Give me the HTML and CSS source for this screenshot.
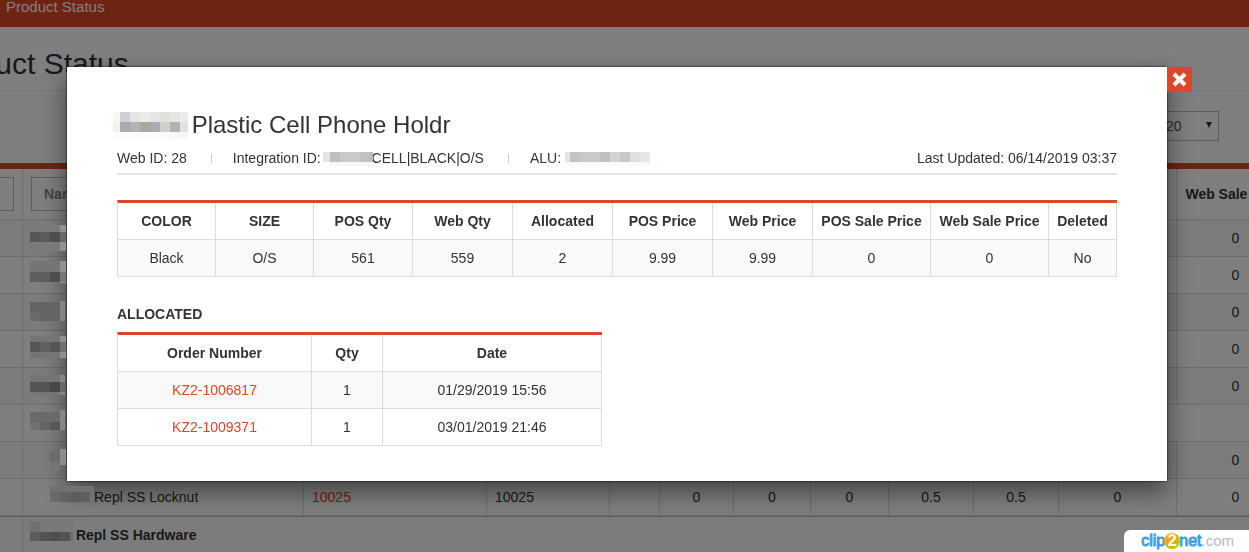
FILE: index.html
```html
<!DOCTYPE html>
<html lang="en">
<head>
    <meta charset="UTF-8">
    <meta name="viewport" content="width=device-width, initial-scale=1.0">
    <title>Product Status</title>
    <link rel="stylesheet" href="styles.css">
</head>
<body>
    <header class="topbar">Product Status</header>

    <main class="page">
        <h1>Product Status</h1>

        <div class="toolbar">
            <div class="page-size">
                <select aria-label="Rows per page">
                    <option>20</option>
                    <option>50</option>
                </select>
            </div>
        </div>

        <table class="products">
            <colgroup>
                <col class="w-id">
                <col>
                <col class="w-integration">
                <col class="w-alu">
                <col class="w-attr">
                <col class="w-qty">
                <col class="w-web">
                <col class="w-allocated">
                <col class="w-price">
                <col class="w-price">
                <col class="w-sale">
                <col class="w-sale">
            </colgroup>
            <thead>
                <tr>
                    <th><input type="text" placeholder="Web ID" aria-label="Web ID"></th>
                    <th><input type="text" placeholder="Name" aria-label="Name"></th>
                    <th></th><th></th><th></th><th></th><th></th><th></th><th></th><th></th><th></th>
                    <th>Web Sale Price</th>
                </tr>
            </thead>
            <tbody>
                <tr>
                    <td></td>
                    <td class="name"><svg class="mask" width="36" height="20"><path fill="#7a7a7a" d="M-3-3h33v26h-33z"/><path fill="#565656" d="M0 4h10v10H0z"/><path fill="#5b5d5c" d="M10 4h10v10H10z"/><path fill="#4f4d4d" d="M20 4h10v10H20z"/><path fill="#919191" d="M30-3h6v26h-6z"/><path fill="#686868" d="M30 4h6v10h-6z"/></svg></td>
                    <td></td><td></td><td></td><td></td><td></td><td></td><td></td><td></td><td></td>
                    <td>0</td>
                </tr>
                <tr>
                    <td></td>
                    <td class="name"><svg class="mask" width="36" height="20"><path fill="#757575" d="M0-4h30v11H0z"/><path fill="#5f5d5d" d="M0 7h10v10H0z"/><path fill="#5d605f" d="M10 7h10v10H10z"/><path fill="#504e4d" d="M20 7h10v10H20z"/><path fill="#919191" d="M30-4h6v22h-6z"/><path fill="#777" d="M30 7h6v10h-6z"/></svg></td>
                    <td></td><td></td><td></td><td></td><td></td><td></td><td></td><td></td><td></td>
                    <td>0</td>
                </tr>
                <tr>
                    <td></td>
                    <td class="name"><svg class="mask" width="36" height="20"><path fill="#656464" d="M0 0h30v10H0z"/><path fill="#6b6b6b" d="M0 10h10v9H0z"/><path fill="#646464" d="M10 10h20v9H10z"/><path fill="#838383" d="M30-1h5v20h-5z"/></svg></td>
                    <td></td><td></td><td></td><td></td><td></td><td></td><td></td><td></td><td></td>
                    <td>0</td>
                </tr>
                <tr>
                    <td></td>
                    <td class="name"><svg class="mask" width="36" height="20"><path fill="#757575" d="M0-3h30v22H0z"/><path fill="#575555" d="M0 3h10v10H0z"/><path fill="#616161" d="M10 3h10v10H10z"/><path fill="#565454" d="M20 3h10v10H20z"/><path fill="#8f8f8f" d="M30-3h6v22h-6z"/><path fill="#707070" d="M30 3h6v10h-6z"/></svg></td>
                    <td></td><td></td><td></td><td></td><td></td><td></td><td></td><td></td><td></td>
                    <td>0</td>
                </tr>
                <tr>
                    <td></td>
                    <td class="name"><svg class="mask" width="36" height="20"><path fill="#757575" d="M0-1h30v20H0z"/><path fill="#555" d="M0 6h20v10H0z"/><path fill="#494646" d="M20 6h10v10H20z"/><path fill="#868686" d="M30-1h5v20h-5z"/><path fill="#6a6a6a" d="M30 6h5v10h-5z"/></svg></td>
                    <td></td><td></td><td></td><td></td><td></td><td></td><td></td><td></td><td></td>
                    <td>0</td>
                </tr>
                <tr>
                    <td></td>
                    <td class="name" colspan="11"><svg class="mask" width="36" height="20"><path fill="#6a6a6a" d="M0-1h30V9H0z"/><path fill="#727272" d="M0 9h10v8H0z"/><path fill="#616564" d="M10 9h10v8H10z"/><path fill="#585656" d="M20 9h10v8H20z"/><path fill="#868686" d="M30-3h5v20h-5z"/></svg></td>
                </tr>
                <tr>
                    <td></td>
                    <td class="name child"><svg class="mask" width="16" height="20"><path fill="#6e6c69" d="M0 2h10v10H0z"/><path fill="#757575" d="M0 12h10v9H0z"/><path fill="#8c8c8c" d="M10-1h6v16h-6z"/></svg></td>
                    <td></td><td></td><td></td><td></td><td></td><td></td><td></td><td></td><td></td>
                    <td>0</td>
                </tr>
                <tr>
                    <td></td>
                    <td class="name child"><svg class="mask" width="44" height="20"><path fill="#717171" d="M0-1h44v6H0z"/><path fill="#6b6a67" d="M0 5h10v10H0z"/><path fill="#64625f" d="M10 5h10v10H10z"/><path fill="#5d5c60" d="M20 5h10v10H20z"/><path fill="#62605e" d="M30 5h10v10H30z"/><path fill="#757370" d="M40 5h4v10h-4z"/></svg>Repl SS Locknut</td>
                    <td class="left"><a href="#">10025</a></td>
                    <td class="left">10025</td>
                    <td></td>
                    <td>0</td>
                    <td>0</td>
                    <td>0</td>
                    <td>0.5</td>
                    <td>0.5</td>
                    <td>0</td>
                    <td>0</td>
                </tr>
                <tr class="group">
                    <td></td>
                    <td class="name" colspan="11"><svg class="mask" width="42" height="20"><path fill="#797979" d="M-3-5h46V7H-3z"/><path fill="#707070" d="M0-3h10V7H0z"/><path fill="#5d5c5c" d="M0 7h10v9H0z"/><path fill="#545253" d="M10 7h10v9H10z"/><path fill="#504c4c" d="M20 7h10v9H20z"/><path fill="#565452" d="M30 7h10v9H30z"/><path fill="#6d6d6d" d="M40 7h3v9h-3z"/></svg> Repl SS Hardware</td>
                </tr>
            </tbody>
        </table>
    </main>

    <div class="overlay">
        <div class="modal" role="dialog" aria-labelledby="modalTitle">
            <button class="close" type="button" aria-label="Close">
                <svg width="17" height="17" viewBox="0 0 17 17"><path d="M3 3l11 11M14 3L3 14" stroke="#fff" stroke-width="4"/></svg>
            </button>

            <h2 id="modalTitle"><svg class="mask" width="68" height="28" viewBox="0 0 68 28">
                <path fill="#faf6f0" d="M-4 1h7v10h-7z"/><path fill="#cfced4" d="M3 1h10v10H3z"/><path fill="#e4e4e5" d="M13 1h10v10H13z"/><path fill="#ebebec" d="M23 1h10v10H23z"/><path fill="#e3e6e5" d="M33 1h10v10H33z"/><path fill="#e1e0de" d="M43 1h10v10H43z"/><path fill="#e4e4e5" d="M53 1h10v10H53z"/><path fill="#e9eaec" d="M63 1h8v10h-8z"/>
                <path fill="#f7f0e8" d="M-4 11h7v10h-7z"/><path fill="#a9a9b1" d="M3 11h10v10H3z"/><path fill="#b2b2b2" d="M13 11h10v10H13z"/><path fill="#a8a7a0" d="M23 11h10v10H23z"/><path fill="#a8adb3" d="M33 11h10v10H33z"/><path fill="#d0cec6" d="M43 11h10v10H43z"/><path fill="#b0b3b2" d="M53 11h10v10H53z"/><path fill="#e0e1e7" d="M63 11h8v10h-8z"/>
                <path fill="#fbfbfb" d="M-4 21h57v7H-4z"/><path fill="#f7f7f7" d="M53 21h18v7H53z"/>
            </svg> Plastic Cell Phone Holdr</h2>

            <div class="meta">
                <span>Web ID: 28</span>
                <span class="divided">Integration ID: <svg class="mask" width="47" height="20">
                    <path fill="#e3e4e4" d="M-2 4h7v10h-7z"/><path fill="#bfbfbf" d="M5 4h10v10H5z"/><path fill="#c9c8cb" d="M15 4h20v10H15z"/><path fill="#c2c1c5" d="M35 4h10v10H35z"/><path fill="#bcbcbc" d="M45 4h3v10h-3z"/><path fill="#f7f7f7" d="M5 14h43v4H5z"/>
                </svg>CELL|BLACK|O/S</span>
                <span class="divided">ALU: <svg class="mask" width="85" height="20">
                    <path fill="#e3e4e4" d="M0 4h5v10H0z"/><path fill="#c4c4bf" d="M5 4h10v10H5z"/><path fill="#c8caca" d="M15 4h20v10H15z"/><path fill="#c2c0bf" d="M35 4h10v10H35z"/><path fill="#d0d3d6" d="M45 4h10v10H45z"/><path fill="#c6c8c7" d="M55 4h10v10H55z"/><path fill="#e0dee4" d="M65 4h10v10H65z"/><path fill="#e3e7e8" d="M75 4h10v10H75z"/><path fill="#fafafa" d="M0 14h85v4H0z"/>
                </svg></span>
                <span class="updated">Last Updated: 06/14/2019 03:37</span>
            </div>

            <table class="grid details">
                <colgroup>
                    <col class="w-variant">
                    <col class="w-variant">
                    <col>
                    <col class="w-number">
                    <col class="w-number">
                    <col class="w-number">
                    <col class="w-number">
                    <col class="w-sale">
                    <col class="w-sale">
                    <col class="w-deleted">
                </colgroup>
                <thead>
                    <tr>
                        <th>COLOR</th>
                        <th>SIZE</th>
                        <th>POS Qty</th>
                        <th>Web Qty</th>
                        <th>Allocated</th>
                        <th>POS Price</th>
                        <th>Web Price</th>
                        <th>POS Sale Price</th>
                        <th>Web Sale Price</th>
                        <th>Deleted</th>
                    </tr>
                </thead>
                <tbody>
                    <tr>
                        <td>Black</td>
                        <td>O/S</td>
                        <td>561</td>
                        <td>559</td>
                        <td>2</td>
                        <td>9.99</td>
                        <td>9.99</td>
                        <td>0</td>
                        <td>0</td>
                        <td>No</td>
                    </tr>
                </tbody>
            </table>

            <h3>ALLOCATED</h3>
            <table class="grid orders">
                <colgroup>
                    <col class="w-order">
                    <col class="w-count">
                    <col>
                </colgroup>
                <thead>
                    <tr>
                        <th>Order Number</th>
                        <th>Qty</th>
                        <th>Date</th>
                    </tr>
                </thead>
                <tbody>
                    <tr>
                        <td><a href="#">KZ2-1006817</a></td>
                        <td>1</td>
                        <td>01/29/2019 15:56</td>
                    </tr>
                    <tr>
                        <td><a href="#">KZ2-1009371</a></td>
                        <td>1</td>
                        <td>03/01/2019 21:46</td>
                    </tr>
                </tbody>
            </table>
        </div>
    </div>

    <div class="badge">
        <span class="badge-blue">clip</span><span class="badge-two">2</span><span class="badge-blue">net</span><span class="badge-com">.com</span>
    </div>
</body>
</html>
```
FILE: styles.css
```css
:root {
    --accent: #dc4727;
    --text: #333;
    --line: #dcdcdc;
    --stripe: #f9f9f9;
}

* {
    margin: 0;
    padding: 0;
    box-sizing: border-box;
}

body {
    font-family: Arial, "Liberation Sans", sans-serif;
    font-size: 14px;
    line-height: 20px;
    color: var(--text);
    background: #fff;
    overflow: hidden;
}

a {
    color: var(--accent);
    text-decoration: none;
}

table {
    border-spacing: 0;
    table-layout: fixed;
}

th,
td {
    padding: 8px;
    height: 37px;
    text-align: center;
    white-space: nowrap;
    border-right: 1px solid var(--line);
    border-bottom: 1px solid var(--line);
}

/* blanked out names */
.mask {
    position: relative;
    z-index: 20;
    vertical-align: top;
    overflow: visible;
    shape-rendering: crispEdges;
}

/* page behind the dialog */
.topbar {
    padding: 0 6px 13px;
    background: var(--accent);
    color: #fff;
    font-size: 15px;
    line-height: 14px;
}

.page {
    margin-left: -68px;
}

h1 {
    padding: 17px 0 6px;
    font-size: 30px;
    font-weight: 400;
    line-height: 40px;
    border-bottom: 1px solid #eee;
}

.toolbar {
    display: flex;
    justify-content: flex-end;
    padding: 20px 30px 22px;
}

.page-size {
    position: relative;
    width: 64px;
}

.page-size select {
    display: block;
    width: 100%;
    height: 30px;
    padding-left: 10px;
    font: inherit;
    color: #555;
    appearance: none;
    border: 1px solid #bbb;
    background: #fff;
}

.page-size::after {
    content: "";
    position: absolute;
    top: 11px;
    right: 7px;
    border: 3px solid transparent;
    border-top: 6px solid #333;
    border-bottom: none;
}

.products {
    width: calc(100% + 46px);
    border-top: 6px solid var(--accent);
}

.products th {
    height: 51px;
}

.products tbody tr:nth-child(odd) {
    background: var(--stripe);
}

.products input {
    display: block;
    width: 100%;
    height: 34px;
    padding: 0 12px;
    font: inherit;
    border: 1px solid #bbb;
    background: #fff;
}

.products input::placeholder {
    color: #888;
}

.products .name,
.products .left {
    text-align: left;
}

.products .name {
    padding-left: 7px;
}

.products .child {
    padding-left: 27px;
}

.products .group td {
    font-weight: 700;
    height: 38px;
    border-top: 1px solid #bbb;
}

.w-id { width: 91px; }
.w-integration { width: 183px; }
.w-alu { width: 123px; }
.w-attr { width: 50px; }
.w-qty { width: 74px; }
.w-web { width: 77px; }
.w-allocated { width: 78px; }
.w-price { width: 85px; }
.w-sale { width: 118px; }

/* dialog */
.overlay {
    position: fixed;
    inset: 0;
    z-index: 10;
    padding: 67px 82px 0 67px;
    background: rgba(0, 0, 0, 0.5);
}

.modal {
    position: relative;
    padding: 42px 50px 35px;
    background: #fff;
    box-shadow: 0 10px 25px rgba(0, 0, 0, 0.5), 0 0 2px #000;
}

.close {
    position: absolute;
    top: 0;
    left: 100%;
    display: flex;
    align-items: center;
    justify-content: center;
    width: 25px;
    height: 25px;
    border: none;
    background: var(--accent);
    cursor: pointer;
}

h2 {
    margin-bottom: 7px;
    font-size: 24px;
    font-weight: 400;
    line-height: 32px;
}

h2 .mask {
    margin-top: 2px;
}

.meta {
    display: flex;
    padding-bottom: 5px;
    margin-bottom: 25px;
    border-bottom: 2px solid #e5e5e5;
}

.divided::before {
    content: "";
    display: inline-block;
    width: 1px;
    height: 9px;
    margin: 0 21px 0 24px;
    background: #ccc;
}

.updated {
    margin-left: auto;
}

.grid {
    border-left: 1px solid var(--line);
    border-top: 3px solid var(--accent);
}

.grid th {
    padding: 8px 0;
}

.grid tbody tr:nth-child(odd) {
    background: var(--stripe);
}

.details {
    width: 100%;
}

.orders {
    width: 485px;
}

h3 {
    margin: 27px 0 8px;
    font-size: 14px;
    line-height: 20px;
}

.w-variant { width: 98px; }
.w-number { width: 100px; }
.w-deleted { width: 68px; }
.w-order { width: 194px; }
.w-count { width: 71px; }

/* watermark */
.badge {
    position: fixed;
    right: 0;
    bottom: 0;
    z-index: 30;
    display: flex;
    align-items: center;
    height: 22px;
    padding: 0 15px 0 17px;
    font-size: 16px;
    background: #fff;
    border-top-left-radius: 6px;
}

.badge-blue {
    color: #3d9fe0;
    -webkit-text-stroke: 1px #3d9fe0;
}

.badge-two {
    width: 16px;
    height: 16px;
    margin: 0 -1px;
    border-radius: 50%;
    background: linear-gradient(135deg, #ffd21e, #f6a01a 35%, #a9cf1e);
    color: #fff;
    font-weight: 700;
    line-height: 16px;
    text-align: center;
}

.badge-com {
    color: #b9b9c4;
    font-size: 15px;
}
```
